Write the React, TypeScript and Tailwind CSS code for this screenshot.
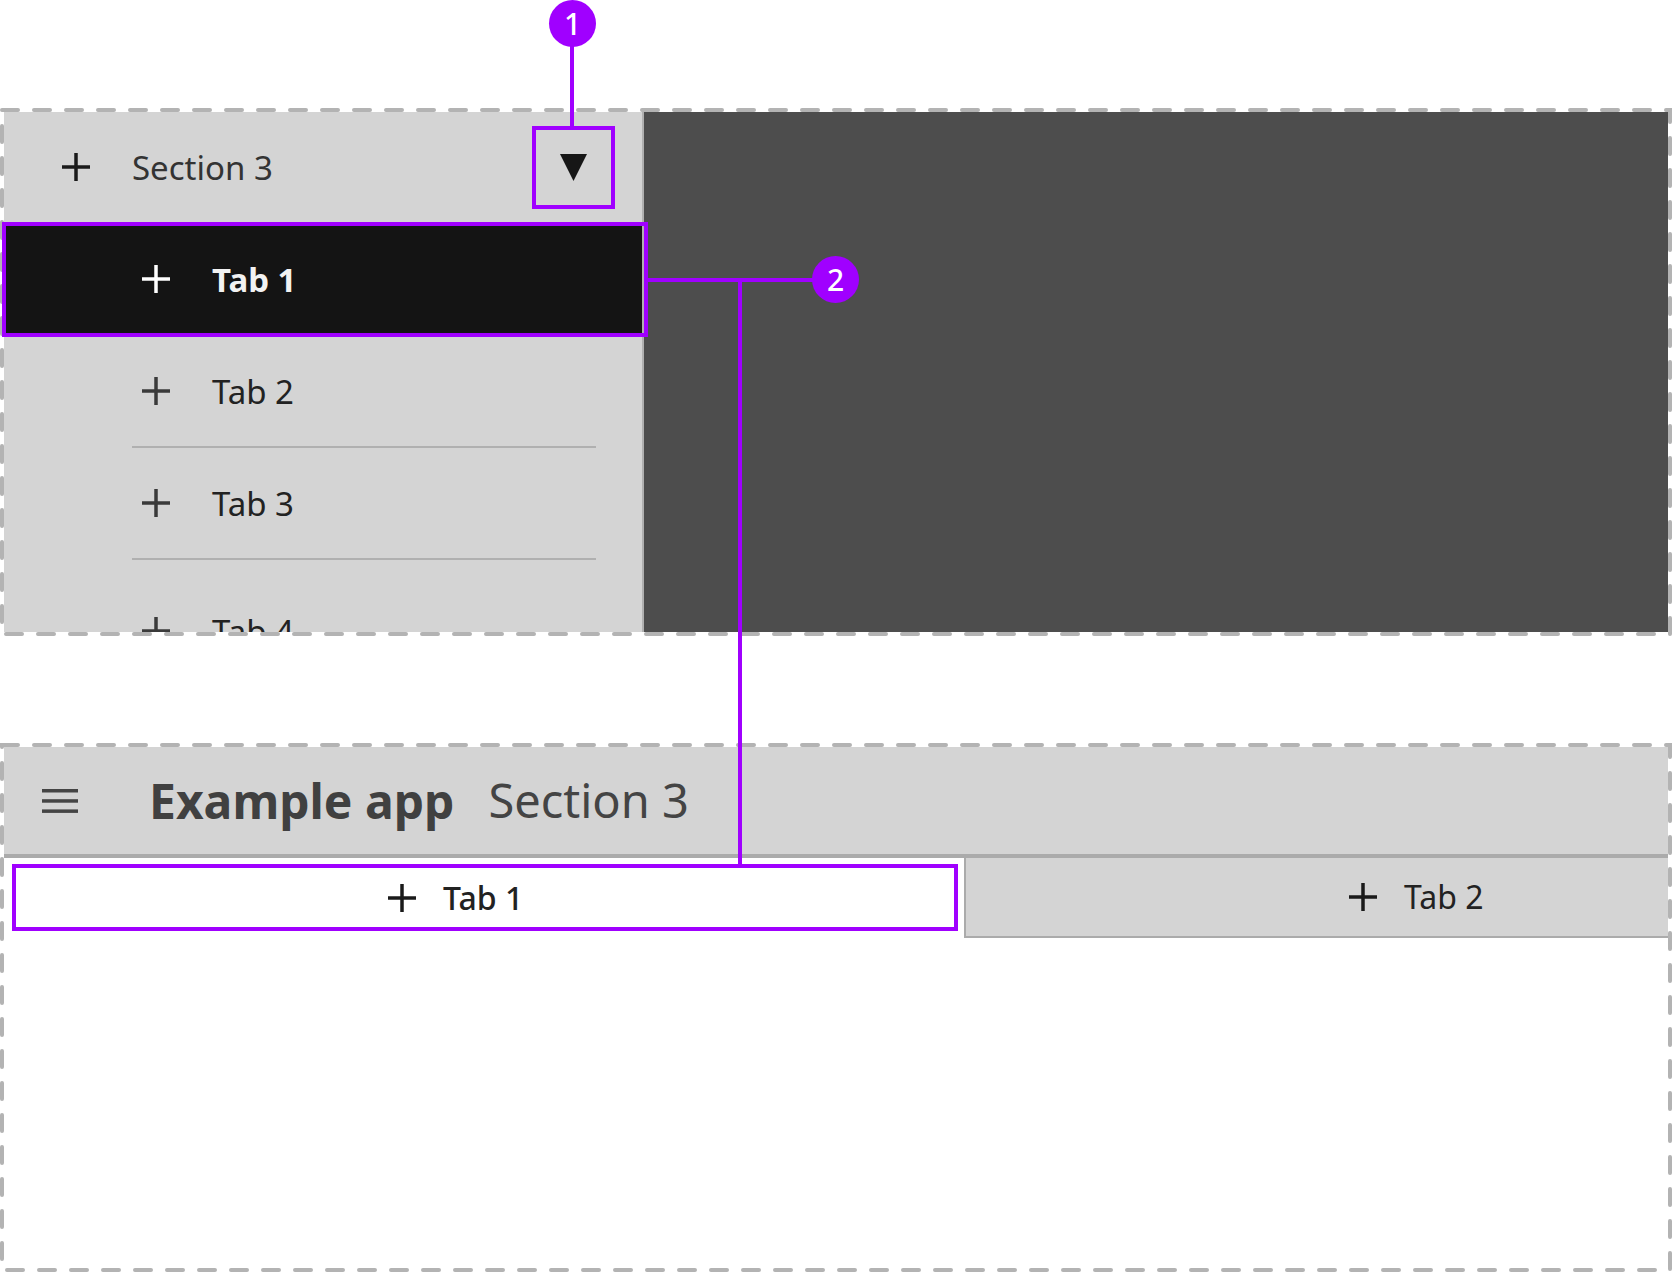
import React from 'react';

function Plus({ color, size = 28, stroke = 3.5 }: { color: string; size?: number; stroke?: number }) {
  const h = size / 2;
  return (
    <svg width={size} height={size} viewBox={`0 0 ${size} ${size}`} className="shrink-0">
      <line x1={h} y1={0} x2={h} y2={size} stroke={color} strokeWidth={stroke} />
      <line x1={0} y1={h} x2={size} y2={h} stroke={color} strokeWidth={stroke} />
    </svg>
  );
}

function DashedFrame({ width, height }: { width: number; height: number }) {
  return (
    <svg width={width} height={height} className="pointer-events-none absolute left-0 top-0">
      <rect
        x={2}
        y={2}
        width={width - 4}
        height={height - 4}
        fill="none"
        stroke="#b3b3b3"
        strokeWidth={4}
        strokeDasharray="16 16"
        strokeLinecap="round"
      />
    </svg>
  );
}

function SideTab({ label, height, active }: { label: string; height: string; active?: boolean }) {
  return (
    <div
      className={
        'flex shrink-0 items-center pl-[138px] ' +
        height +
        (active ? ' bg-[#141414]' : '')
      }
    >
      <Plus color={active ? '#ffffff' : '#3a3a3a'} />
      <span
        className={
          'ml-[42px] text-[33px] leading-none ' +
          (active ? 'font-bold text-[#f2f2f2]' : 'text-[#222222]')
        }
      >
        {label}
      </span>
    </div>
  );
}

function Separator() {
  return <div className="ml-[128px] h-[2px] w-[464px] shrink-0 bg-[#b0b0b0]" />;
}

function TopPanel() {
  return (
    <div className="relative flex h-[528px] p-[4px]">
      <div className="flex w-[640px] shrink-0 flex-col overflow-hidden border-r-2 border-[#b0b0b0] bg-[#d4d4d4]">
        <div className="flex h-[110px] shrink-0 items-center pl-[58px] pr-[27px]">
          <Plus color="#1a1a1a" />
          <span className="ml-[42px] text-[33px] leading-none text-[#333333]">Section 3</span>
          <div className="ml-auto flex h-[83px] w-[83px] items-center justify-center border-4 border-[#a000ff]">
            <svg width="27" height="27" viewBox="0 0 27 27">
              <polygon points="0,0 27,0 13.5,27" fill="#161616" />
            </svg>
          </div>
        </div>
        <SideTab label="Tab 1" height="h-[114px]" active />
        <SideTab label="Tab 2" height="h-[110px]" />
        <Separator />
        <SideTab label="Tab 3" height="h-[110px]" />
        <Separator />
        <SideTab label="Tab 4" height="h-[142px]" />
      </div>
      <div className="flex-1 bg-[#4d4d4d]" />
      <DashedFrame width={1672} height={528} />
    </div>
  );
}

function BottomPanel() {
  return (
    <div className="relative flex h-[529px] flex-col p-[4px]">
      <div className="flex h-[111px] shrink-0 items-center border-b-4 border-[#ababab] bg-[#d4d4d4] pl-[38px]">
        <svg width="36" height="24" viewBox="0 0 36 24" className="shrink-0">
          <rect x="0" y="0" width="36" height="3.5" fill="#444444" />
          <rect x="0" y="10.2" width="36" height="3.5" fill="#444444" />
          <rect x="0" y="20.4" width="36" height="3.5" fill="#444444" />
        </svg>
        <span className="ml-[71px] text-[48px] font-bold leading-none text-[#404040]">Example app</span>
        <span className="ml-[34px] text-[47px] leading-none text-[#444444]">Section 3</span>
      </div>
      <div className="flex h-[80px] shrink-0">
        <div className="w-[960px] shrink-0 bg-white pb-[7px] pl-[8px] pr-[6px] pt-[6px]">
          <div className="flex h-full items-center border-4 border-[#a000ff] pl-[372px]">
            <Plus color="#1a1a1a" />
            <span className="ml-[27px] text-[32px] font-medium leading-none text-[#222222]">Tab 1</span>
          </div>
        </div>
        <div className="flex flex-1 items-center border-b-2 border-l-2 border-[#ababab] bg-[#d4d4d4] pl-[383px]">
          <Plus color="#1a1a1a" />
          <span className="ml-[27px] text-[32px] leading-none text-[#222222]">Tab 2</span>
        </div>
      </div>
      <div className="flex-1 bg-white" />
      <DashedFrame width={1672} height={529} />
    </div>
  );
}

function Callout({ n, className }: { n: string; className: string }) {
  return (
    <div
      className={
        'absolute flex h-[47px] w-[47px] items-center justify-center rounded-full bg-[#a000ff] text-[30px] font-medium leading-none text-white ' +
        className
      }
    >
      {n}
    </div>
  );
}

export default function App() {
  return (
    <div className="relative h-[1272px] w-[1672px] overflow-hidden bg-white font-['Noto_Sans',sans-serif]">
      <div className="pt-[108px]">
        <TopPanel />
      </div>
      <div className="mt-[107px]">
        <BottomPanel />
      </div>

      {/* annotations */}
      <div className="pointer-events-none absolute left-[2px] top-[222px] h-[115px] w-[646px] border-4 border-[#a000ff]" />
      <div className="absolute left-[570px] top-[44px] h-[83px] w-[4px] bg-[#a000ff]" />
      <div className="absolute left-[647px] top-[278px] h-[4px] w-[168px] bg-[#a000ff]" />
      <div className="absolute left-[738px] top-[278px] h-[587px] w-[4px] bg-[#a000ff]" />
      <Callout n="1" className="left-[549px] top-[0px]" />
      <Callout n="2" className="left-[812px] top-[256px]" />
    </div>
  );
}
